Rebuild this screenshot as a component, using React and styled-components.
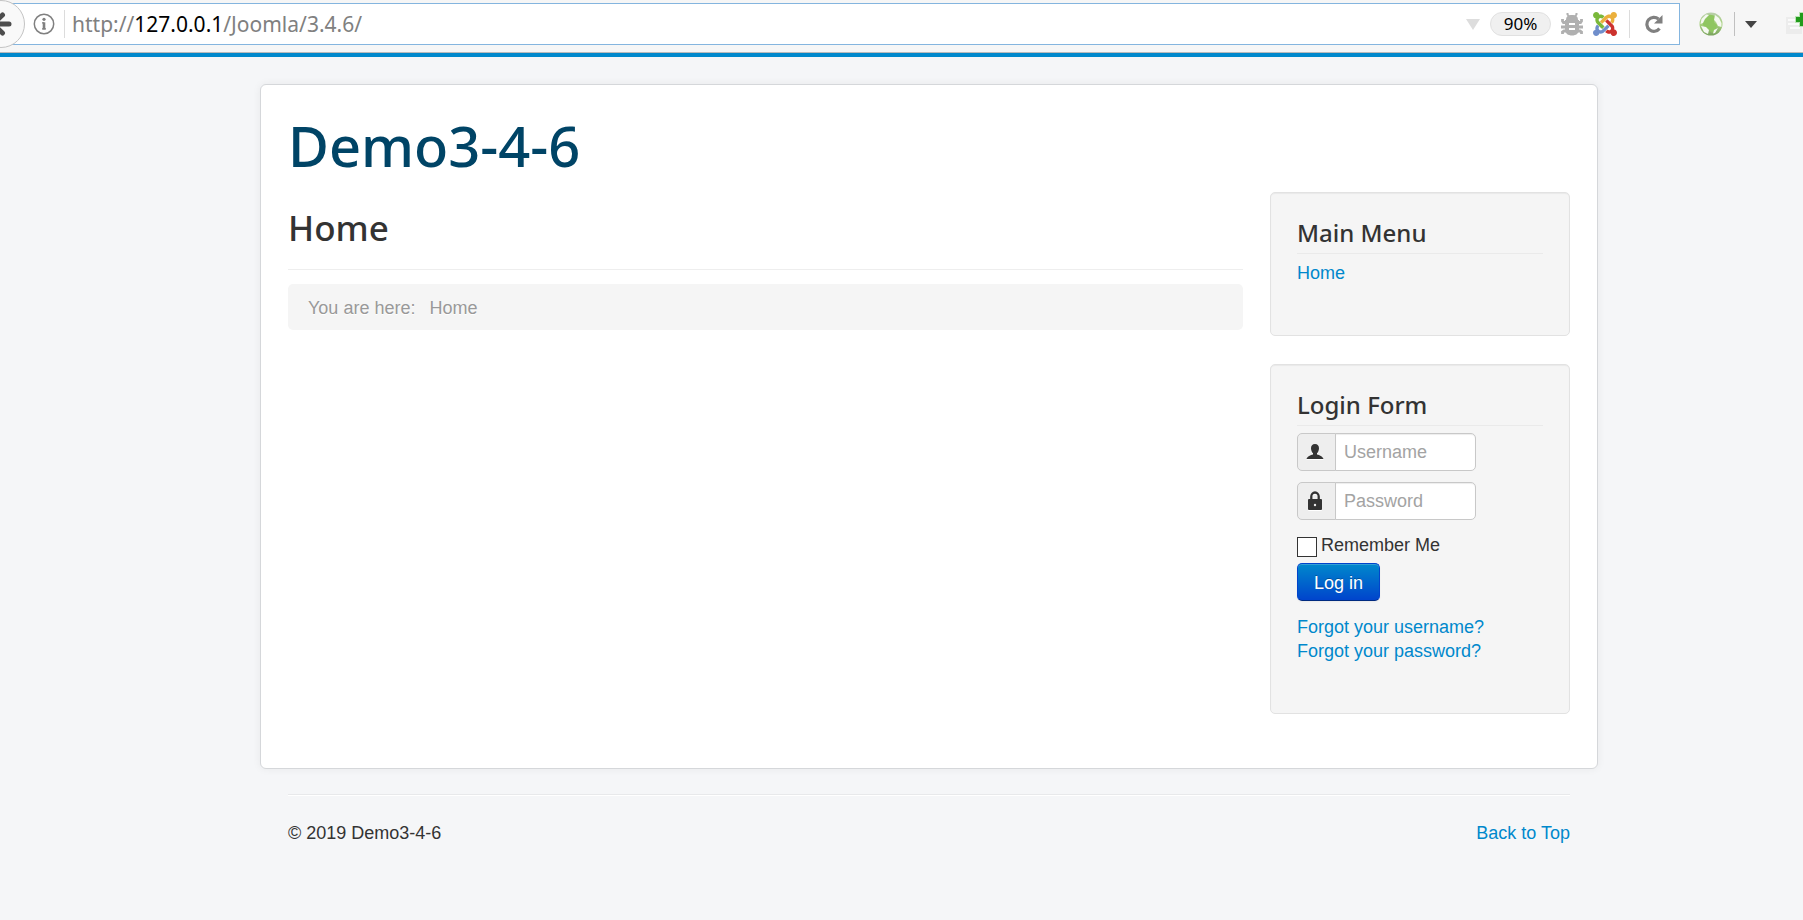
import React from "react";
import styled, { createGlobalStyle } from "styled-components";

const GlobalStyle = createGlobalStyle`
  *, *::before, *::after { box-sizing: border-box; }
  body {
    margin: 0;
    background: #f5f6f8;
    color: #333;
    font: 18px/24px "Liberation Sans", Arial, sans-serif;
    overflow-x: hidden;
  }
  a { color: #08c; text-decoration: none; }
  h1, h2, h3, ul, p { margin: 0; padding: 0; }
  h1, h2, h3 { font-family: "Noto Sans", "Open Sans", sans-serif; font-weight: 500; }
`;

const Toolbar = styled.header`
  display: flex;
  align-items: flex-start;
  height: 53px;
  padding-top: 3px;
  background: #f6f6f6;
  border-bottom: 1px solid #b9babb;
  overflow: hidden;
  position: relative;
`;

const BackButton = styled.button`
  position: absolute;
  left: -23px;
  top: 0;
  display: flex;
  align-items: center;
  justify-content: center;
  width: 48px;
  height: 48px;
  padding: 0;
  border: 1px solid #c4c4c4;
  border-radius: 50%;
  background: #f9f9f9;
`;

const AddressBar = styled.div`
  display: flex;
  align-items: center;
  flex: 1;
  min-width: 0;
  height: 42px;
  padding: 0 16px 0 33px;
  background: #fff;
  border: 1px solid #84b5df;
  border-left: 0;
`;

const Address = styled.div`
  flex: 1;
  min-width: 0;
  margin-left: 7px;
  font: 21px/30px "Noto Sans", "Open Sans", sans-serif;
  color: #808080;
  white-space: nowrap;
  overflow: hidden;
  b { font-weight: 400; color: #000; }
`;

const BarActions = styled.div`
  display: flex;
  align-items: center;
  gap: 10px;
`;

const IconButton = styled.button`
  display: flex;
  align-items: center;
  justify-content: center;
  flex-shrink: 0;
  padding: 0;
  border: 0;
  background: none;
  svg { display: block; }
`;

const Divider = styled.span`
  flex-shrink: 0;
  width: 1px;
  height: ${(p) => p.$height || 28}px;
  margin: 0 ${(p) => p.$right || 0}px 0 ${(p) => p.$left || 0}px;
  background: ${(p) => p.$color || "#dcdcdc"};
`;

const ZoomLevel = styled.button`
  width: 61px;
  height: 24px;
  padding: 0;
  border: 1px solid #e1e1e1;
  border-radius: 12px;
  background: #f0f0f0;
  color: #000;
  font: 17px/22px "Noto Sans", "Open Sans", sans-serif;
`;

const Extensions = styled.div`
  display: flex;
  align-items: center;
  height: 42px;
  width: 123px;
  padding-left: 19px;
  overflow: hidden;
`;

const Page = styled.div`
  border-top: 4px solid #08c;
  padding: 27px 205px 28px 260px;
`;

const Card = styled.div`
  padding: 27px 27px 54px;
  background: #fff;
  border: 1px solid #d5d7da;
  border-radius: 6px;
  box-shadow: 0 0 8px rgba(0, 0, 0, 0.06);
`;

const SiteTitle = styled.h1`
  font-size: 56px;
  line-height: 66px;
  a { color: #004466; }
`;

const Columns = styled.div`
  display: flex;
  align-items: flex-start;
  gap: 27px;
  margin-top: 14px;
`;

const Main = styled.main`
  flex: 1;
  min-width: 0;
`;

const PageHeader = styled.div`
  margin: 9px 0 14px;
  padding-bottom: 14px;
  border-bottom: 1px solid #eee;
  h2 { font-size: 35px; line-height: 54px; }
`;

const Breadcrumb = styled.ul`
  display: flex;
  gap: 14px;
  padding: 12px 20px 10px;
  list-style: none;
  border-radius: 5px;
  background: #f5f5f5;
  color: #999;
  text-shadow: 0 1px 0 #fff;
`;

const Sidebar = styled.aside`
  display: flex;
  flex-direction: column;
  gap: 28px;
  width: 300px;
`;

const Panel = styled.section`
  padding: 24px 26px 50px;
  background: #f5f5f5;
  border: 1px solid #e2e2e2;
  border-radius: 5px;
  box-shadow: inset 0 1px 1px rgba(0, 0, 0, 0.05);
`;

const PanelTitle = styled.h3`
  margin-bottom: 7px;
  padding-bottom: 4px;
  border-bottom: 1px solid #eaeaea;
  font-size: 24px;
  line-height: 32px;
`;

const LinkList = styled.ul`
  list-style: none;
  a { display: block; width: fit-content; }
`;

const Field = styled.div`
  display: flex;
  width: 179px;
  height: 38px;
  margin-bottom: 11px;
`;

const AddOn = styled.label`
  display: flex;
  align-items: center;
  justify-content: center;
  width: 39px;
  background: #eee;
  border: 1px solid #c8c8c8;
  border-radius: 5px 0 0 5px;
  svg { display: block; margin-right: 4px; filter: drop-shadow(0 1px 0 #fff); }
`;

const TextInput = styled.input`
  flex: 1;
  min-width: 0;
  margin-left: -1px;
  padding: 0 8px;
  border: 1px solid #c8c8c8;
  border-radius: 0 5px 5px 0;
  background: #fff;
  box-shadow: inset 0 1px 1px rgba(0, 0, 0, 0.075);
  font: 18px/24px "Liberation Sans", Arial, sans-serif;
  color: #555;
  &::placeholder { color: #a3a3a3; opacity: 1; }
`;

const Remember = styled.div`
  display: flex;
  align-items: flex-start;
  gap: 4px;
  margin-top: 13px;
  height: 24px;
`;

const Checkbox = styled.input`
  appearance: none;
  width: 20px;
  height: 20px;
  margin: 4px 0 0;
  border: 1px solid #333;
  background: #fff;
`;

const LoginButton = styled.button`
  display: block;
  height: 38px;
  margin: 6px 0 14px;
  padding: 1px 16px 0;
  border: 1px solid #0044cc;
  border-bottom-color: #002a80;
  border-radius: 5px;
  background: linear-gradient(#0088cc, #0044cc);
  box-shadow: inset 0 1px 0 rgba(255, 255, 255, 0.2), 0 1px 2px rgba(0, 0, 0, 0.05);
  color: #fff;
  font: 18px/24px "Liberation Sans", Arial, sans-serif;
  text-shadow: 0 -1px 0 rgba(0, 0, 0, 0.25);
`;

const Footer = styled.footer`
  display: flex;
  justify-content: space-between;
  margin: 25px 28px 0;
  padding-top: 26px;
  border-top: 1px solid #e8e9eb;
  box-shadow: inset 0 1px 0 #fff;
`;

const BackIcon = () => (
  <svg width="26" height="26" viewBox="0 0 26 26" fill="none" stroke="#4d4d4d" strokeWidth="5">
    <path d="M14.500 4 5 13l9.500 9M6 13h15" strokeLinecap="round" strokeLinejoin="round" />
  </svg>
);

const InfoIcon = () => (
  <svg width="22" height="22" viewBox="0 0 22 22" fill="none" stroke="#808080">
    <circle cx="11" cy="11" r="9.7" strokeWidth="1.5" />
    <circle cx="11" cy="6.300" r="1.600" fill="#808080" stroke="none" />
    <path d="M9 9.900h2M9 15.900h4" strokeWidth="1.200" />
    <path d="M11 9.300v7.200" strokeWidth="2.600" />
  </svg>
);

const TriangleIcon = ({ width, height, color }) => (
  <svg width={width} height={height} viewBox="0 0 14 11" preserveAspectRatio="none">
    <path d="M0 0h14L7 11z" fill={color} />
  </svg>
);

const BugIcon = () => (
  <svg width="22" height="24" viewBox="0 0 22 24" fill="none" stroke="#b0b0b0">
    <path d="M5 8C5 4 7.500 3 11 3s6 1 6 5z" fill="#b0b0b0" stroke="none" />
    <path d="M6.500 1v1.500L8.500 5M15.500 1v1.500L13.500 5" strokeWidth="2" />
    <path d="M4 8h14v9c0 4.500-3 6.500-7 6.500S4 21.500 4 17z" fill="#b0b0b0" stroke="none" />
    <path d="M5 10.500H2.500L1.500 9V7M17 10.500h2.500L20.500 9V7M5 15H0M17 15h5M5 19H3l-1.500 1v2M17 19h2l1.500 1v2" strokeWidth="2.800" />
    <path d="M8 12h6M8 17h6" stroke="#fff" strokeWidth="2.200" />
  </svg>
);

const JoomlaIcon = () => (
  <svg width="24" height="24" viewBox="0 32 448 448">
    <path fill="#7ab83a" d="M.6 92.100C.6 58.800 27.400 32 60.400 32c30 0 54.500 21.900 59.200 50.200 32.600-7.600 67.100.6 96.500 30l-44.300 44.300c-20.500-20.500-42.600-16.300-55.400-3.500-14.300 14.300-14.300 37.900 0 52.200l99.500 99.500-44 44.300c-87.700-87.200-49.700-49.700-99.800-99.700-26.800-26.500-35-64.800-24.800-98.900C20.400 144.600.6 120.700.6 92.100z" />
    <path fill="#ebb03c" d="M130.100 208.500l44.300 44.300c10-10 89.700-89.700 99.700-99.800 14.300-14.300 37.600-14.300 51.900 0 12.800 12.800 17 35-3.500 55.400l44 44.300c31.200-31.200 38.500-67.600 28.900-101.200 29.200-4.100 51.900-29.200 51.900-59.500 0-33.200-26.800-60.100-59.800-60.100-30.300 0-55.400 22.500-59.500 51.600-33.800-9.900-71.700-1.500-98.300 25.100-18.300 19.100-71.100 71.500-99.600 99.900z" />
    <path fill="#cc322e" d="M396.400 360.700c8.200-32.700-.9-68.500-26.300-93.900-11.800-12.200 5 4.700-99.500-99.700l-44.300 44.300 99.700 99.700c14.300 14.300 14.300 37.600 0 51.900-12.800 12.800-35 17-55.400-3.500l-44 44.300c27.600 30.200 68 38.800 102.700 28 5.500 27.400 29.700 48.100 58.900 48.100 33 0 59.800-26.800 59.800-60.100 0-30.200-22.500-55-51.600-59.100z" />
    <path fill="#6f8ecb" d="M312.100 307.600l-44-44.300c-87 86.400-50.400 50.400-99.700 99.800-14.300 14.300-37.600 14.300-51.900 0-13.100-13.400-16.900-35.300 3.200-55.400l-44-44.300c-30.200 30.200-38 65.200-29.500 98.300-26.700 6-46.200 29.900-46.200 58.200C0 453.200 26.800 480 59.800 480c28.600 0 52.500-19.800 58.600-46.700 32.700 8.200 68.500-.6 94.200-26 32.100-32 12.200-12.400 99.500-99.700z" />
  </svg>
);

const ReloadIcon = () => (
  <svg width="18" height="18" viewBox="0 0 18 18">
    <path d="M14.500 13.500A7 7 0 1 1 13.500 4" fill="none" stroke="#808080" strokeWidth="3.200" />
    <path d="M17.500 0v8.500H9z" fill="#808080" />
  </svg>
);

const GlobeIcon = () => (
  <svg width="24" height="24" viewBox="0 0 24 24">
    <defs>
      <linearGradient id="globe" x1="0" y1="0" x2="0" y2="1">
        <stop offset="0" stopColor="#b9cfab" />
        <stop offset="0.5" stopColor="#a8d180" />
        <stop offset="1" stopColor="#7aa35d" />
      </linearGradient>
    </defs>
    <circle cx="12" cy="12" r="11.500" fill="url(#globe)" />
    <path d="M8 3c4-1 8 0 9 3l-2 4 3 3-1 5-4 3-4-4-4-2-2-5 2-5z" fill="#8fc660" />
    <path d="M2.500 7 7 2.500l3 .5-4 4-2 4-2.500 1zM16 3l4 3 2.500 5v4L19 14l-2-4-2-2zM2 14l5 1 3 3-1 4-4-2zM15 18l4-2-3 5-2 .5z" fill="#f5f9f1" />
  </svg>
);

const AddPageIcon = () => (
  <svg width="24" height="24" viewBox="0 0 24 24">
    <path d="M1 5h16v17H1z" fill="#ececec" />
    <path d="M3 8h12M3 12h12M5 16h10" stroke="#fafafa" strokeWidth="2" />
    <path d="M14 0h6v4h5v7h-5v4h-6v-4h-4V4h4z" fill="#b9e4b3" />
    <path d="M15 1h4v4h5v5h-5v4h-4v-4h-4V5h4z" fill="#219b1b" />
  </svg>
);

const UserIcon = () => (
  <svg width="18" height="18" viewBox="0 0 18 18" fill="#333">
    <path d="M9 1c2.600 0 4 1.600 4 4.300 0 2.200-.9 4.100-2 5v1.200c2.500.8 5.500 1.500 6.500 4.500H.5c1-3 4-3.700 6.500-4.500v-1.200c-1.100-.9-2-2.800-2-5C5 2.600 6.400 1 9 1z" />
  </svg>
);

const LockIcon = () => (
  <svg width="18" height="20" viewBox="0 0 18 20">
    <path d="M5.300 9V5.500a3.700 4 0 0 1 7.400 0V9" fill="none" stroke="#333" strokeWidth="2.300" />
    <rect x="2" y="8" width="14" height="11" rx="1" fill="#333" />
    <circle cx="9" cy="14" r="1.200" fill="#eee" />
  </svg>
);

export default function App() {
  return (
    <>
      <GlobalStyle />
      <Toolbar id="top">
        <AddressBar>
          <IconButton aria-label="Site information"><InfoIcon /></IconButton>
          <Divider $left={9} />
          <Address>http://<b>127.0.0.1</b>/Joomla/3.4.6/</Address>
          <BarActions>
            <IconButton aria-label="History"><TriangleIcon width={14} height={11} color="#ddd" /></IconButton>
            <ZoomLevel>90%</ZoomLevel>
            <IconButton aria-label="Debug"><BugIcon /></IconButton>
            <IconButton aria-label="Joomla"><JoomlaIcon /></IconButton>
            <Divider $left={2} $right={5} />
            <IconButton aria-label="Reload"><ReloadIcon /></IconButton>
          </BarActions>
        </AddressBar>
        <BackButton aria-label="Back"><BackIcon /></BackButton>
        <Extensions>
          <IconButton aria-label="Proxy"><GlobeIcon /></IconButton>
          <Divider $left={11} $right={10} $height={24} $color="#c0c0c0" />
          <IconButton aria-label="Proxy menu"><TriangleIcon width={12} height={7} color="#444" /></IconButton>
          <Divider $left={27} $color="transparent" />
          <IconButton aria-label="Add page"><AddPageIcon /></IconButton>
        </Extensions>
      </Toolbar>
      <Page>
        <Card>
          <SiteTitle><a href="#top">Demo3-4-6</a></SiteTitle>
          <Columns>
            <Main>
              <PageHeader><h2>Home</h2></PageHeader>
              <Breadcrumb>
                <li>You are here:</li>
                <li>Home</li>
              </Breadcrumb>
            </Main>
            <Sidebar>
              <Panel>
                <PanelTitle>Main Menu</PanelTitle>
                <LinkList>
                  <li><a href="#home">Home</a></li>
                </LinkList>
              </Panel>
              <Panel>
                <PanelTitle>Login Form</PanelTitle>
                <form onSubmit={(e) => e.preventDefault()}>
                  <Field>
                    <AddOn htmlFor="username" aria-label="Username"><UserIcon /></AddOn>
                    <TextInput id="username" type="text" placeholder="Username" />
                  </Field>
                  <Field>
                    <AddOn htmlFor="password" aria-label="Password"><LockIcon /></AddOn>
                    <TextInput id="password" type="password" placeholder="Password" />
                  </Field>
                  <Remember>
                    <Checkbox id="remember" type="checkbox" />
                    <label htmlFor="remember">Remember Me</label>
                  </Remember>
                  <LoginButton type="submit">Log in</LoginButton>
                  <LinkList>
                    <li><a href="#username">Forgot your username?</a></li>
                    <li><a href="#password">Forgot your password?</a></li>
                  </LinkList>
                </form>
              </Panel>
            </Sidebar>
          </Columns>
        </Card>
        <Footer>
          <p>© 2019 Demo3-4-6</p>
          <a href="#top">Back to Top</a>
        </Footer>
      </Page>
    </>
  );
}
